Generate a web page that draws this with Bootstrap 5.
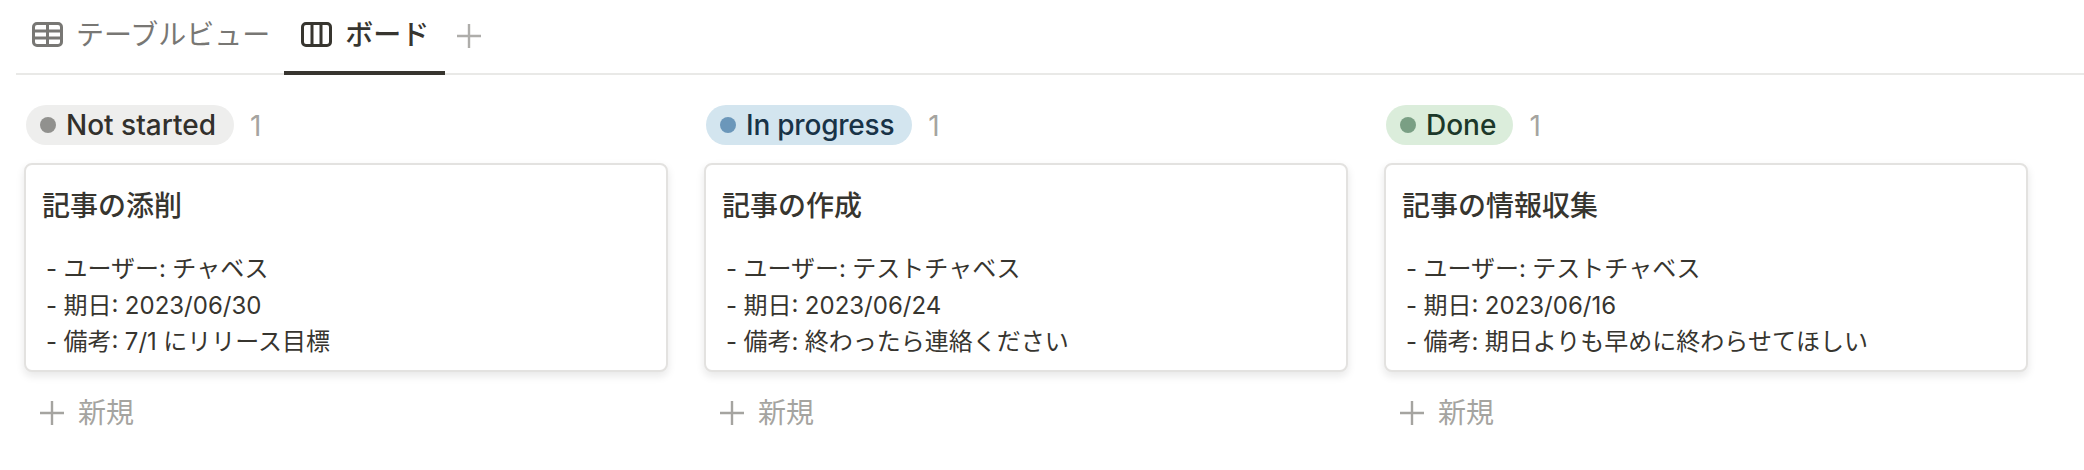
<!DOCTYPE html>
<html lang="ja">
<head>
<meta charset="utf-8">
<title>ボード</title>
<link href="https://cdn.jsdelivr.net/npm/bootstrap@5.3.0/dist/css/bootstrap.min.css" rel="stylesheet">
<style>
body { font-family: Inter, "Noto Sans CJK JP", sans-serif; color: #37352f; background: #fff; overflow: hidden; }
.view-bar { margin-left: 16px; height: 75px; border-bottom: 2px solid #e9e9e7; }
.view-tab { height: 75px; padding: 0 17px 2px; gap: 13px; font-size: 28px; font-weight: 400; color: #787774; border-bottom: 4px solid transparent; text-decoration: none; }
.view-tab.is-on { color: #37352f; font-weight: 500; border-bottom-color: #37352f; padding-right: 16px; }
.view-tab:first-child { padding-left: 16px; padding-right: 14px; }
.add-view { margin-left: 12px; height: 71px; }
.board { padding: 30px 0 0 24px; gap: 36px; }
.board-col { width: 644px; flex: none; }
.col-head { height: 40px; margin-left: 2px; margin-bottom: 18px; }
.status-pill { height: 40px; padding: 0 18px 0 14px; gap: 10px; border-radius: 20px; font-size: 28px; font-weight: 500; line-height: 40px; }
.status-dot { width: 16px; height: 16px; border-radius: 50%; }
.tone-gray { background: #eeeeed; color: #32302c; }
.tone-gray .status-dot { background: #91918e; }
.tone-blue { background: #d3e5ef; color: #183347; letter-spacing: -.22px; }
.tone-blue .status-dot { background: #6b97ba; }
.tone-green { background: #dbeddb; color: #1c3829; padding-right: 17px; }
.tone-green .status-dot { background: #7a9f84; }
.col-count { margin-left: 16px; padding-top: 2px; font-size: 28px; color: #a5a4a0; }
.task-card { height: 209px; border: 2px solid #e3e2e0; border-radius: 8px; box-shadow: 0 4px 8px rgba(15,15,15,.1); padding: 23px 16px 0 16px; }
.task-title { font-size: 28px; font-weight: 500; line-height: 36px; margin: 0 0 27px; color: #37352f; }
.task-lines { font-size: 24px; line-height: 36.5px; padding-left: 4px; word-spacing: -.3px; }
.new-row { height: 40px; margin-top: 21px; padding-left: 16px; gap: 14px; font-size: 28px; color: #a5a4a0; }
</style>
</head>
<body>
<nav class="view-bar d-flex align-items-start">
  <a class="view-tab d-flex align-items-center" href="#">
    <svg width="31" height="25" viewBox="0 0 31 25" fill="none" stroke="#787774" stroke-width="3"><rect x="1.5" y="1.5" width="28" height="22" rx="3.5"/><path d="M2 9h27M2 16h27M15.5 2v21"/></svg>
    <span>テーブルビュー</span>
  </a>
  <a class="view-tab is-on d-flex align-items-center" href="#">
    <svg width="31" height="25" viewBox="0 0 31 25" fill="none" stroke="#37352f" stroke-width="3"><rect x="1.5" y="1.5" width="28" height="22" rx="3.5"/><path d="M11 2v21M20 2v21"/></svg>
    <span>ボード</span>
  </a>
  <span class="add-view d-flex align-items-center">
    <svg width="24" height="24" viewBox="0 0 24 24" stroke="#aeadaa" stroke-width="2.4"><path d="M0 12h24M12 0v24"/></svg>
  </span>
</nav>
<main class="board d-flex">
  <section class="board-col">
    <div class="col-head d-flex align-items-center">
      <div class="status-pill tone-gray d-flex align-items-center"><span class="status-dot"></span><span>Not started</span></div>
      <span class="col-count">1</span>
    </div>
    <article class="card task-card">
      <h3 class="task-title">記事の添削</h3>
      <div class="task-lines">
        <div>- ユーザー: チャベス</div>
        <div>- 期日: 2023/06/30</div>
        <div>- 備考: 7/1 にリリース目標</div>
      </div>
    </article>
    <div class="new-row d-flex align-items-center">
      <svg width="24" height="24" viewBox="0 0 24 24" stroke="#a5a4a0" stroke-width="2.4"><path d="M0 12h24M12 0v24"/></svg>
      <span>新規</span>
    </div>
  </section>
  <section class="board-col">
    <div class="col-head d-flex align-items-center">
      <div class="status-pill tone-blue d-flex align-items-center"><span class="status-dot"></span><span>In progress</span></div>
      <span class="col-count">1</span>
    </div>
    <article class="card task-card">
      <h3 class="task-title">記事の作成</h3>
      <div class="task-lines">
        <div>- ユーザー: テストチャベス</div>
        <div>- 期日: 2023/06/24</div>
        <div>- 備考: 終わったら連絡ください</div>
      </div>
    </article>
    <div class="new-row d-flex align-items-center">
      <svg width="24" height="24" viewBox="0 0 24 24" stroke="#a5a4a0" stroke-width="2.4"><path d="M0 12h24M12 0v24"/></svg>
      <span>新規</span>
    </div>
  </section>
  <section class="board-col">
    <div class="col-head d-flex align-items-center">
      <div class="status-pill tone-green d-flex align-items-center"><span class="status-dot"></span><span>Done</span></div>
      <span class="col-count">1</span>
    </div>
    <article class="card task-card">
      <h3 class="task-title">記事の情報収集</h3>
      <div class="task-lines">
        <div>- ユーザー: テストチャベス</div>
        <div>- 期日: 2023/06/16</div>
        <div>- 備考: 期日よりも早めに終わらせてほしい</div>
      </div>
    </article>
    <div class="new-row d-flex align-items-center">
      <svg width="24" height="24" viewBox="0 0 24 24" stroke="#a5a4a0" stroke-width="2.4"><path d="M0 12h24M12 0v24"/></svg>
      <span>新規</span>
    </div>
  </section>
</main>
<script src="https://cdn.jsdelivr.net/npm/bootstrap@5.3.0/dist/js/bootstrap.bundle.min.js"></script>
</body>
</html>
